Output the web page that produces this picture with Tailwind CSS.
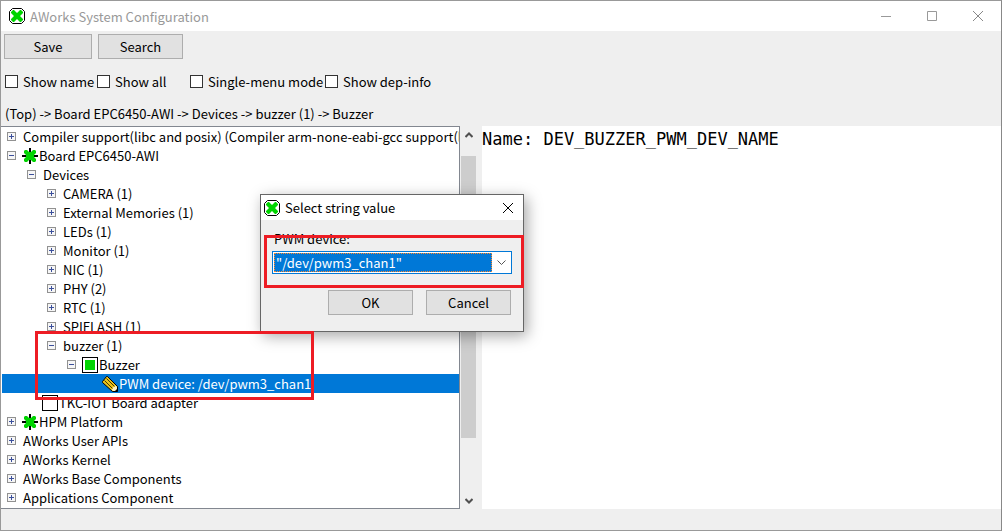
<!DOCTYPE html>
<html lang="en">
<head>
<meta charset="utf-8">
<meta name="viewport" content="width=device-width, initial-scale=1">
<title>AWorks System Configuration</title>
<script src="https://cdn.jsdelivr.net/npm/@tailwindcss/browser@4"></script>
</head>
<body class="bg-[#efefef]">
<svg width="0" height="0" class="absolute" aria-hidden="true">
  <defs>
    <symbol id="app" viewBox="0 0 16 16">
      <path d="M3.500.5h9l3 3v9l-3 3h-9l-3-3v-9z" fill="#fff" stroke="#000"/>
      <path d="M4 2h1l3 3 3-3h1l2 2v1l-3 3 3 3v1l-2 2h-1l-3-3-3 3H4l-2-2v-1l3-3-3-3V4z" fill="#00d400"/>
    </symbol>
    <symbol id="plus" viewBox="0 0 9 9">
      <rect x=".5" y=".5" width="8" height="8" fill="#f6f6f6" stroke="#919191"/>
      <path d="M2 4.500h5M4.500 2v5" stroke="#3b4f9b"/>
    </symbol>
    <symbol id="minus" viewBox="0 0 9 9">
      <rect x=".5" y=".5" width="8" height="8" fill="#f6f6f6" stroke="#919191"/>
      <path d="M2 4.500h5" stroke="#3b4f9b"/>
    </symbol>
    <symbol id="star" viewBox="0 0 16 16">
      <path d="M7 0h2v16H7zM0 7h16v2H0z" fill="#000"/>
      <path d="M2 3 3 2h2l2 2h2l2-2h2l1 1v2l-2 2v2l2 2v2l-1 1h-2l-2-2H7l-2 2H3l-1-1v-2l2-2V7L2 5z" fill="#00d400"/>
    </symbol>
    <symbol id="checked" viewBox="0 0 16 16">
      <rect x=".5" y=".5" width="15" height="15" fill="#fff" stroke="#000"/>
      <rect x="3" y="3" width="10" height="10" fill="#00d400"/>
    </symbol>
    <symbol id="empty" viewBox="0 0 16 16">
      <rect x=".5" y=".5" width="15" height="15" fill="#fff" stroke="#000"/>
    </symbol>
    <symbol id="pencil" viewBox="0 0 16 16">
      <path d="M5.500.5 15.500 10.500v5h-5L.5 6.500v-1l4-5z" fill="#e8c21c" stroke="#000"/>
      <path d="M10 12.500 13.500 9.500l1.500 1.500v4h-4l-1-1z" fill="#fff3c4"/>
      <path d="M12.500 15.500 15.500 12.500v3z" fill="#000"/>
      <path d="m2.500 4.500 8 8M4.500 2.500l8 8" stroke="#4a3900" fill="none"/>
    </symbol>
  </defs>
</svg>

<div class="relative flex h-screen flex-col overflow-hidden border border-[#999] border-r-[#888] bg-[#efefef] font-['Noto_Sans_CJK_SC','Noto_Sans',sans-serif] text-[13px] leading-[19px] text-black">
  <header class="flex h-[30px] shrink-0 items-center bg-white pl-2 text-[#999]">
    <svg class="mr-[5px] size-4"><use href="#app"/></svg>
    <h1 class="flex-1">AWorks System Configuration</h1>
    <button aria-label="Minimize" class="flex h-full w-[46px] items-center justify-center"><svg class="size-[10px]" viewBox="0 0 10 10"><path d="M0 5.500h10" stroke="#999"/></svg></button>
    <button aria-label="Maximize" class="flex h-full w-[46px] items-center justify-center"><svg class="size-[10px]" viewBox="0 0 10 10"><path d="M.5.5h9v9h-9z" fill="none" stroke="#999"/></svg></button>
    <button aria-label="Close" class="flex h-full w-[46px] items-center justify-center"><svg class="size-[10px]" viewBox="0 0 10 10"><path d="m0 0 10 10M10 0 0 10" stroke="#888"/></svg></button>
  </header>

  <div class="flex gap-[6px] px-[3px] pt-[3px]">
    <button class="h-[25px] w-[88px] border border-[#adadad] bg-[#e1e1e1]">Save</button>
    <button class="h-[25px] w-[85px] border border-[#adadad] bg-[#e1e1e1]">Search</button>
  </div>

  <div class="flex h-[19px] shrink-0 items-center mt-[13px] pl-1">
    <label class="flex w-[92px] items-center gap-[5px]"><input type="checkbox" class="size-[13px] appearance-none border border-[#333] bg-white checked:bg-[#0078d7]">Show name</label>
    <label class="flex w-[93px] items-center gap-[5px]"><input type="checkbox" class="size-[13px] appearance-none border border-[#333] bg-white checked:bg-[#0078d7]">Show all</label>
    <label class="flex w-[135px] items-center gap-[5px]"><input type="checkbox" class="size-[13px] appearance-none border border-[#333] bg-white checked:bg-[#0078d7]"><span class="whitespace-nowrap">Single-menu mode</span></label>
    <label class="flex items-center gap-[5px]"><input type="checkbox" class="size-[13px] appearance-none border border-[#333] bg-white checked:bg-[#0078d7]">Show dep-info</label>
  </div>

  <p class="mt-[13px] pb-[3px] pl-1">(Top) -&gt; Board EPC6450-AWI -&gt; Devices -&gt; buzzer (1) -&gt; Buzzer</p>

  <main class="flex min-h-0 flex-1">
    <ul class="w-[459px] shrink-0 overflow-hidden whitespace-nowrap border border-l-0 border-[#828790] bg-white pl-px *:flex *:h-[19px] *:items-center">
      <li class="pl-[5px]"><button aria-label="Expand" class="mr-[7px]"><svg class="size-[9px]"><use href="#plus"/></svg></button>Compiler support(libc and posix) (Compiler arm-none-eabi-gcc support(libc))</li>
      <li class="pl-[5px]"><button aria-label="Collapse" class="mr-[6px]"><svg class="size-[9px]"><use href="#minus"/></svg></button><svg class="mr-px size-4"><use href="#star"/></svg>Board EPC6450-AWI</li>
      <li class="pl-[25px]"><button aria-label="Collapse" class="mr-[7px]"><svg class="size-[9px]"><use href="#minus"/></svg></button>Devices</li>
      <li class="pl-[45px]"><button aria-label="Expand" class="mr-[7px]"><svg class="size-[9px]"><use href="#plus"/></svg></button>CAMERA (1)</li>
      <li class="pl-[45px]"><button aria-label="Expand" class="mr-[7px]"><svg class="size-[9px]"><use href="#plus"/></svg></button>External Memories (1)</li>
      <li class="pl-[45px]"><button aria-label="Expand" class="mr-[7px]"><svg class="size-[9px]"><use href="#plus"/></svg></button>LEDs (1)</li>
      <li class="pl-[45px]"><button aria-label="Expand" class="mr-[7px]"><svg class="size-[9px]"><use href="#plus"/></svg></button>Monitor (1)</li>
      <li class="pl-[45px]"><button aria-label="Expand" class="mr-[7px]"><svg class="size-[9px]"><use href="#plus"/></svg></button>NIC (1)</li>
      <li class="pl-[45px]"><button aria-label="Expand" class="mr-[7px]"><svg class="size-[9px]"><use href="#plus"/></svg></button>PHY (2)</li>
      <li class="pl-[45px]"><button aria-label="Expand" class="mr-[7px]"><svg class="size-[9px]"><use href="#plus"/></svg></button>RTC (1)</li>
      <li class="pl-[45px]"><button aria-label="Expand" class="mr-[7px]"><svg class="size-[9px]"><use href="#plus"/></svg></button>SPIFLASH (1)</li>
      <li class="pl-[45px]"><button aria-label="Collapse" class="mr-[7px]"><svg class="size-[9px]"><use href="#minus"/></svg></button>buzzer (1)</li>
      <li class="pl-[65px]"><button aria-label="Collapse" class="mr-[6px]"><svg class="size-[9px]"><use href="#minus"/></svg></button><svg class="mr-px size-4"><use href="#checked"/></svg>Buzzer</li>
      <li class="bg-[#0078d7] pl-[100px] text-white"><svg class="mr-px size-4"><use href="#pencil"/></svg>PWM device: /dev/pwm3_chan1</li>
      <li class="pl-[40px]"><svg class="mr-px size-4"><use href="#empty"/></svg>TKC-IOT Board adapter</li>
      <li class="pl-[5px]"><button aria-label="Expand" class="mr-[6px]"><svg class="size-[9px]"><use href="#plus"/></svg></button><svg class="mr-px size-4"><use href="#star"/></svg>HPM Platform</li>
      <li class="pl-[5px]"><button aria-label="Expand" class="mr-[7px]"><svg class="size-[9px]"><use href="#plus"/></svg></button>AWorks User APIs</li>
      <li class="pl-[5px]"><button aria-label="Expand" class="mr-[7px]"><svg class="size-[9px]"><use href="#plus"/></svg></button>AWorks Kernel</li>
      <li class="pl-[5px]"><button aria-label="Expand" class="mr-[7px]"><svg class="size-[9px]"><use href="#plus"/></svg></button>AWorks Base Components</li>
      <li class="pl-[5px]"><button aria-label="Expand" class="mr-[7px]"><svg class="size-[9px]"><use href="#plus"/></svg></button>Applications Component</li>
    </ul>
    <div class="mr-[6px] ml-px flex w-[15px] shrink-0 flex-col">
      <button aria-label="Scroll up" class="flex h-[30px] justify-center pt-[6px]"><svg class="h-[6px] w-2" viewBox="0 0 8 6"><path d="M.5 5 4 1.500 7.500 5" fill="none" stroke="#505050" stroke-width="2"/></svg></button>
      <div class="h-[282px] bg-[#cdcdcd]"></div>
      <button aria-label="Scroll down" class="flex flex-1 items-end justify-center pb-[5px]"><svg class="h-[6px] w-2" viewBox="0 0 8 6"><path d="M.5 1 4 4.500 7.500 1" fill="none" stroke="#505050" stroke-width="2"/></svg></button>
    </div>
    <textarea readonly aria-label="Option details" class="min-w-0 flex-1 resize-none bg-white pt-[2px] font-['DejaVu_Sans_Mono',monospace] text-[17px] leading-[22px] outline-none">Name: DEV_BUZZER_PWM_DEV_NAME</textarea>
  </main>
  <footer class="h-[21px] shrink-0"></footer>

  <div role="dialog" aria-label="Select string value" class="absolute top-[193px] left-[259px] flex h-[138px] w-[264px] flex-col border border-[#666] bg-[#efefef] shadow-[3px_4px_14px_rgba(0,0,0,0.35)]">
    <div class="flex h-[25px] shrink-0 items-center bg-white pl-[3px]">
      <svg class="mr-[5px] size-4"><use href="#app"/></svg>
      <h2 class="flex-1">Select string value</h2>
      <button aria-label="Close dialog" class="flex h-full w-[31px] items-center justify-center"><svg class="size-[10px]" viewBox="0 0 10 10"><path d="m0 0 10 10M10 0 0 10" stroke="#000"/></svg></button>
    </div>
    <label for="pwm" class="mt-[9px] ml-[13px]">PWM device:</label>
    <div class="mx-[11px] mt-[3px] flex h-[23px] shrink-0 items-center border border-[#0078d7] bg-white p-px">
      <select id="pwm" class="h-full min-w-0 flex-1 appearance-none border border-dotted border-[#ff8728] bg-[#0078d7] pl-px leading-[17px] text-white outline-none"><option>"/dev/pwm3_chan1"</option></select>
      <svg class="mr-[4px] ml-[5px] h-[6px] w-[9px]" viewBox="0 0 9 6"><path d="M.5.5l4 4 4-4" fill="none" stroke="#555"/></svg>
    </div>
    <div class="mt-4 flex justify-end gap-[13px] pr-3">
      <button class="h-[25px] w-[85px] border border-[#adadad] bg-[#e1e1e1]">OK</button>
      <button class="h-[25px] w-[85px] border border-[#adadad] bg-[#e1e1e1]">Cancel</button>
    </div>
  </div>

  <div class="pointer-events-none absolute top-[234px] left-[263px] h-[53px] w-[260px] border-3 border-[#ed1c24]"></div>
  <div class="pointer-events-none absolute top-[330px] left-[34px] h-[69px] w-[279px] border-3 border-[#ed1c24]"></div>
</div>
</body>
</html>
